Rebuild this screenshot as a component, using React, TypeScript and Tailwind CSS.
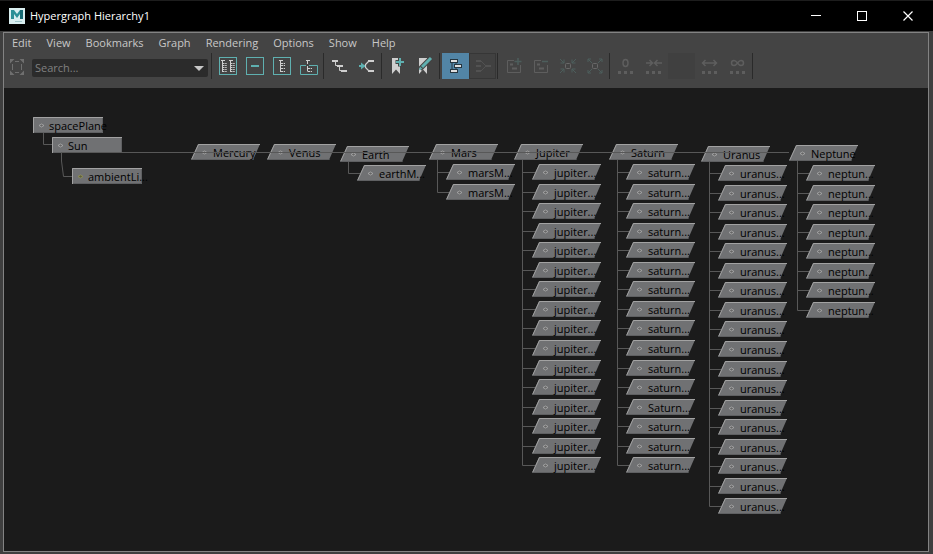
import React from "react";

type Shape = "box" | "slant";

interface GraphNode {
  label: string;
  x: number;
  y: number;
  shape: Shape;
  light?: boolean;
}

interface Branch {
  parent: string;
  x: number;
  y: number;
  childX: number;
  childY: number;
  children: string[];
}

const rep = (label: string, count: number): string[] => Array.from({ length: count }, () => label);

const rootNodes: GraphNode[] = [
  { label: "spacePlane", x: 29, y: 29, shape: "box" },
  { label: "Sun", x: 48, y: 49, shape: "box" },
  { label: "ambientLi...", x: 68, y: 80, shape: "box", light: true },
];

const branches: Branch[] = [
  { parent: "Mercury", x: 187, y: 56, childX: 0, childY: 0, children: [] },
  { parent: "Venus", x: 263, y: 56, childX: 0, childY: 0, children: [] },
  { parent: "Earth", x: 336, y: 58, childX: 353, childY: 77, children: ["earthM..."] },
  { parent: "Mars", x: 425, y: 56, childX: 442, childY: 76, children: rep("marsM...", 2) },
  { parent: "Jupiter", x: 510, y: 56, childX: 528, childY: 76, children: rep("jupiter...", 16) },
  {
    parent: "Saturn",
    x: 605,
    y: 56,
    childX: 622,
    childY: 76,
    children: [...rep("saturn...", 12), "Saturn...", ...rep("saturn...", 3)],
  },
  { parent: "Uranus", x: 697, y: 58, childX: 714, childY: 77, children: rep("uranus...", 18) },
  { parent: "Neptune", x: 785, y: 57, childX: 802, childY: 77, children: rep("neptun...", 8) },
];

const ROW_PITCH = 19.56;
const rowY = (b: Branch, i: number): number => b.childY + Math.round(i * ROW_PITCH);

function NodeView({ label, x, y, shape, light }: GraphNode) {
  const slant = shape === "slant";
  return (
    <div
      className={`absolute flex h-4 w-[70px] items-center ${slant ? "pl-[22px]" : "pl-4"}`}
      style={{ left: x, top: y }}
    >
      <svg className="absolute inset-0 h-4 w-[70px]" viewBox="0 0 70 16" aria-hidden="true">
        <polygon points={slant ? "7,0 69,0 62,16 0,16" : "0,0 70,0 70,16 0,16"} fill="#707173" />
        <polyline
          points={slant ? "0.5,15.5 7.5,0.5 69,0.5" : "0.5,16 0.5,0.5 70,0.5"}
          fill="none"
          stroke="#a2a2a2"
        />
        <path d={slant ? "M0 15.5H62.5" : "M1 15.5H69.5V1"} fill="none" stroke="#5f6062" />
        <path
          d={slant ? "M11 8.5L13.5 7L16 8.5L13.5 10Z" : "M6 8.5L8.5 7L11 8.5L8.5 10Z"}
          fill={light ? "#5c5d40" : "#666666"}
          stroke={light ? "#9a9a50" : "#b4b4b4"}
          strokeWidth="0.7"
        />
      </svg>
      <span className="relative pt-0.5 whitespace-nowrap text-black">{label}</span>
    </div>
  );
}

function Connectors() {
  return (
    <svg
      className="pointer-events-none absolute inset-0 h-full w-full"
      fill="none"
      stroke="#585858"
      aria-hidden="true"
    >
      <path d="M39.5 45V56.5H48M57.5 65V73L59.5 88.5H68M57 64.5H785" />
      {branches
        .filter((b) => b.children.length > 0)
        .map((b) => {
          const tx = b.x + 8.5;
          const last = rowY(b, b.children.length - 1) + 8.5;
          const ticks = b.children.map((_, i) => `M${tx} ${rowY(b, i) + 8.5}H${b.childX + 3}`).join("");
          return <path key={b.parent} d={`M${tx} ${b.y + 16}V${last}${ticks}`} />;
        })}
    </svg>
  );
}

const TEAL = "#5fb0b0";
const PALE = "#cfcfcf";
const DIM = "#5e5e5e";
const DIM_TEAL = "#4d5e5c";

function Glyph({ children }: { children: React.ReactNode }) {
  return (
    <svg className="h-5 w-5" viewBox="0 0 20 20" fill="none" aria-hidden="true">
      {children}
    </svg>
  );
}

function ToolButton({
  label,
  look = "plain",
  children,
}: {
  label: string;
  look?: "plain" | "active" | "framed" | "blank";
  children?: React.ReactNode;
}) {
  const looks = {
    plain: "",
    active: "bg-[#5285a6]",
    framed: "border border-[#363636] bg-[#414141]",
    blank: "bg-[#404040]",
  };
  return (
    <button
      type="button"
      aria-label={label}
      title={label}
      className={`flex h-[26px] w-[27px] shrink-0 items-center justify-center ${looks[look]}`}
    >
      {children}
    </button>
  );
}

function Separator() {
  return <div className="mr-0.5 ml-px h-[26px] w-px shrink-0 bg-[#2a2a2a]" />;
}

function Dots() {
  return <path d="M2 15h3v3H2zM8 15h3v3H8zM14 15h3v3h-3z" fill={DIM} />;
}

function CornerArrows({ inward = false }: { inward?: boolean }) {
  return (
    <>
      <path
        d={
          inward
            ? "M2 3L6 7M6 3.5V7H2.5M18 3L14 7M14 3.5V7h3.5M2 17L6 13M6 16.5V13H2.5M18 17L14 13M14 16.5V13h3.5"
            : "M3 3L7 7M3 6V3H6M17 3L13 7M14 3h3V6M3 17L7 13M3 14v3H6M17 17L13 13M14 17h3V14"
        }
        stroke={DIM_TEAL}
      />
      <rect x="7.5" y="7.5" width="5" height="5" rx="1" stroke="#686868" />
    </>
  );
}

const menus = ["Edit", "View", "Bookmarks", "Graph", "Rendering", "Options", "Show", "Help"];

export default function App() {
  return (
    <div className="flex h-screen min-h-[554px] flex-col bg-[#3f3f3f] font-['Open_Sans','Noto_Sans',sans-serif] text-[11px] leading-4">
      <header className="flex h-[31px] shrink-0 items-center border-t border-[#1d1d1d] bg-black pl-[9px] text-white">
        <svg className="h-4 w-4" viewBox="0 0 16 16" aria-hidden="true">
          <rect width="16" height="16" fill="#d9eef0" />
          <path d="M2 11V2H5L8 6L11 2H14V11H11V6L8 10L5 6V11Z" fill="#2b8f97" />
          <path d="M11 2H14V11H11Z" fill="#176a73" />
          <path d="M6 13.5H13" stroke="#9cc4c8" />
        </svg>
        <h1 className="ml-[5px]">Hypergraph Hierarchy1</h1>
        <div className="ml-auto flex h-full pr-0.5">
          <button type="button" aria-label="Minimize" className="flex w-[46px] items-center justify-center">
            <svg className="h-3 w-3" viewBox="0 0 12 12" stroke="white" aria-hidden="true">
              <path d="M1 5.5H11" />
            </svg>
          </button>
          <button type="button" aria-label="Maximize" className="flex w-[46px] items-center justify-center">
            <svg className="h-3 w-3" viewBox="0 0 12 12" stroke="white" fill="none" aria-hidden="true">
              <rect x="1.5" y="1.5" width="9" height="9" />
            </svg>
          </button>
          <button type="button" aria-label="Close" className="flex w-[46px] items-center justify-center">
            <svg className="h-3 w-3" viewBox="0 0 12 12" stroke="white" strokeWidth="1.2" aria-hidden="true">
              <path d="M1.5 1.5L10.5 10.5M10.5 1.5L1.5 10.5" />
            </svg>
          </button>
        </div>
      </header>

      <main className="mt-px mr-1 mb-0.5 ml-[3px] flex min-h-0 flex-1 flex-col border border-[#838383] bg-[#444444]">
        <nav className="flex h-5 shrink-0 items-center gap-[15px] pl-2 text-[#c8c8c8]">
          {menus.map((m) => (
            <button key={m} type="button">
              {m}
            </button>
          ))}
        </nav>

        <div className="flex h-[35px] shrink-0 items-start">
          <button type="button" aria-label="Frame hierarchy" className="flex h-7 w-[26px] items-center justify-center">
            <svg className="h-[18px] w-[18px]" viewBox="0 0 18 18" fill="none" stroke="#6f6f6f" aria-hidden="true">
              <path d="M4.5 6V12M13.5 6V12M7 3.5H11M7 14.5H11" />
              <path d="M2 1H6.5L2 5.5ZM16 1H11.5L16 5.5ZM2 17H6.5L2 12.5ZM16 17H11.5L16 12.5Z" fill="#6f6f6f" stroke="none" />
            </svg>
          </button>
          <div className="mt-1.5 ml-0.5 flex h-[18px] w-44 shrink-0 items-center rounded-xs bg-[#2b2b2b]">
            <input
              type="text"
              aria-label="Search"
              placeholder="Search..."
              className="min-w-0 flex-1 bg-transparent pl-[3px] text-[#c8c8c8] outline-none placeholder:text-[#808080]"
            />
            <button type="button" aria-label="Search history" className="flex h-full w-[18px] items-center justify-center">
              <svg className="h-[5px] w-2.5" viewBox="0 0 10 5" fill="#c8c8c8" aria-hidden="true">
                <path d="M0 0H10L5 5Z" />
              </svg>
            </button>
          </div>

          <div className="ml-0.5 flex">
            <Separator />
            <ToolButton label="Scene hierarchy">
              <Glyph>
                <rect x="1.5" y="1.5" width="17" height="17" stroke={TEAL} />
                <path d="M3 4.5H7M4.5 5V16M11 4.5H15M12.5 5V16" stroke={PALE} />
                <path
                  d="M5 7.5H9M5 9.5H9M5 11.5H9M5 13.5H9M5 15.5H9M13 7.5H17M13 9.5H17M13 11.5H17M13 13.5H17M13 15.5H17"
                  stroke={PALE}
                  strokeDasharray="1.5 0.7"
                />
              </Glyph>
            </ToolButton>
            <ToolButton label="Collapse">
              <Glyph>
                <rect x="1.5" y="1.5" width="17" height="17" stroke={TEAL} />
                <path d="M6 10H14" stroke={TEAL} strokeWidth="2" />
              </Glyph>
            </ToolButton>
            <ToolButton label="Show selected hierarchy">
              <Glyph>
                <rect x="1.5" y="1.5" width="17" height="17" stroke={TEAL} />
                <path d="M7 4.5H11M8.5 5V16" stroke={PALE} />
                <path d="M9 7.5H13M9 9.5H13M9 12.5H13M9 15.5H13" stroke={PALE} strokeDasharray="2 0.7" />
              </Glyph>
            </ToolButton>
            <ToolButton label="Show selected branch">
              <Glyph>
                <path d="M7 9.5H1.5V18.5H18.5V9.5H10" stroke={TEAL} />
                <path d="M7 4.5H11M8.5 5V8M8.5 10V15.5" stroke={PALE} />
                <path d="M9 12.5H13M9 15.5H13" stroke={PALE} strokeDasharray="2 0.7" />
              </Glyph>
            </ToolButton>
            <Separator />
            <ToolButton label="Input connections">
              <Glyph>
                <path d="M5.5 5V9.5H7M9.5 11V14.5H11" stroke={PALE} />
                <path d="M2 5H8M7 10H13M11 15H17" stroke={PALE} strokeWidth="2" />
              </Glyph>
            </ToolButton>
            <ToolButton label="Output connections">
              <Glyph>
                <path d="M11 5H17M11 15H17" stroke={PALE} strokeWidth="2" />
                <path d="M11.5 5.5L8.5 8.5V11.5L11.5 14.5" stroke={PALE} strokeWidth="1.2" />
                <path d="M2 10H8" stroke={TEAL} strokeWidth="2" />
                <path d="M4 6.5L8.5 10L4 13.5Z" fill={TEAL} />
              </Glyph>
            </ToolButton>
            <Separator />
            <ToolButton label="Add bookmark">
              <Glyph>
                <path d="M4 2H12V18L8 13.5L4 18Z" fill={PALE} />
                <path d="M12 1.500V10.500M7.500 6H16.500" stroke="#444444" strokeWidth="4" />
                <path d="M12 2V10M8 6H16" stroke={TEAL} strokeWidth="2" />
              </Glyph>
            </ToolButton>
            <ToolButton label="Edit bookmark">
              <Glyph>
                <path d="M4 2H12V18L8 13.5L4 18Z" fill={PALE} />
                <path d="M5 13L16 2" stroke="#444444" strokeWidth="5" />
                <path d="M7 11L16 2" stroke={TEAL} strokeWidth="3" />
                <path d="M4 14L5 10.5L7.5 13Z" fill={TEAL} />
              </Glyph>
            </ToolButton>
            <Separator />
            <ToolButton label="Freeform layout" look="active">
              <Glyph>
                <path d="M6 5.5V15M10 6V15" stroke="#263640" />
                <rect x="4.5" y="3.5" width="7" height="3" fill="#dedede" stroke="#263640" />
                <rect x="8.5" y="8.5" width="7" height="3" fill="#dedede" stroke="#263640" />
                <rect x="4.5" y="13.5" width="7" height="3" fill="#dedede" stroke="#263640" />
              </Glyph>
            </ToolButton>
            <ToolButton label="Automatic layout" look="framed">
              <Glyph>
                <path d="M3 5H8M3 15H8M3 10H8M12 10H18" stroke="#525252" strokeWidth="2" />
                <path d="M8 5L13 10L8 15" stroke="#525252" />
              </Glyph>
            </ToolButton>
            <Separator />
            <ToolButton label="Create container">
              <Glyph>
                <path d="M10 4.5H3.5V16.5H16.5V9" stroke={DIM} />
                <path d="M6 8.5H9M8 12.5H13" stroke={DIM} strokeWidth="2" />
                <path d="M14 2V9M10.5 5.5H17.5" stroke={DIM_TEAL} strokeWidth="1.5" />
              </Glyph>
            </ToolButton>
            <ToolButton label="Remove container">
              <Glyph>
                <path d="M10 4.5H3.5V16.5H16.5V9" stroke={DIM} />
                <path d="M6 8.5H9M8 12.5H13" stroke={DIM} strokeWidth="2" />
                <path d="M11 5.5H17" stroke={DIM_TEAL} strokeWidth="1.5" />
              </Glyph>
            </ToolButton>
            <ToolButton label="Collapse container">
              <Glyph>
                <CornerArrows inward />
              </Glyph>
            </ToolButton>
            <ToolButton label="Expand container">
              <Glyph>
                <CornerArrows />
              </Glyph>
            </ToolButton>
            <Separator />
            <div className="flex gap-px">
              <ToolButton label="Zero depth">
                <Glyph>
                  <ellipse cx="9.5" cy="7" rx="2.5" ry="3.5" stroke={DIM} strokeWidth="1.5" />
                  <Dots />
                </Glyph>
              </ToolButton>
              <ToolButton label="Decrease depth">
                <Glyph>
                  <path d="M2 7H8M5.5 4L8.5 7L5.5 10M18 7H11M13.5 4L10.5 7L13.5 10" stroke={DIM} strokeWidth="1.5" />
                  <Dots />
                </Glyph>
              </ToolButton>
              <ToolButton label="Traversal depth" look="blank" />
              <ToolButton label="Increase depth">
                <Glyph>
                  <path d="M3 7H16M5.5 4L2.5 7L5.5 10M13.5 4L16.5 7L13.5 10" stroke={DIM} strokeWidth="1.5" />
                  <Dots />
                </Glyph>
              </ToolButton>
              <ToolButton label="Unlimited depth">
                <Glyph>
                  <path
                    d="M9.5 7C8 5 7 4.5 6 4.5A2.5 2.5 0 0 0 6 9.5C7 9.5 8 9 9.5 7C11 5 12 4.5 13 4.5A2.5 2.5 0 0 1 13 9.5C12 9.5 11 9 9.5 7Z"
                    stroke={DIM}
                    strokeWidth="1.5"
                  />
                  <Dots />
                </Glyph>
              </ToolButton>
            </div>
            <Separator />
          </div>
        </div>

        <section aria-label="Hierarchy graph" className="relative min-h-0 flex-1 overflow-hidden bg-[#1b1b1b]">
          {rootNodes.map((n) => (
            <NodeView key={n.label} {...n} />
          ))}
          {branches.map((b) => (
            <React.Fragment key={b.parent}>
              <NodeView label={b.parent} x={b.x} y={b.y} shape="slant" />
              {b.children.map((c, i) => (
                <NodeView key={i} label={c} x={b.childX} y={rowY(b, i)} shape="slant" />
              ))}
            </React.Fragment>
          ))}
          <Connectors />
        </section>
      </main>
    </div>
  );
}
